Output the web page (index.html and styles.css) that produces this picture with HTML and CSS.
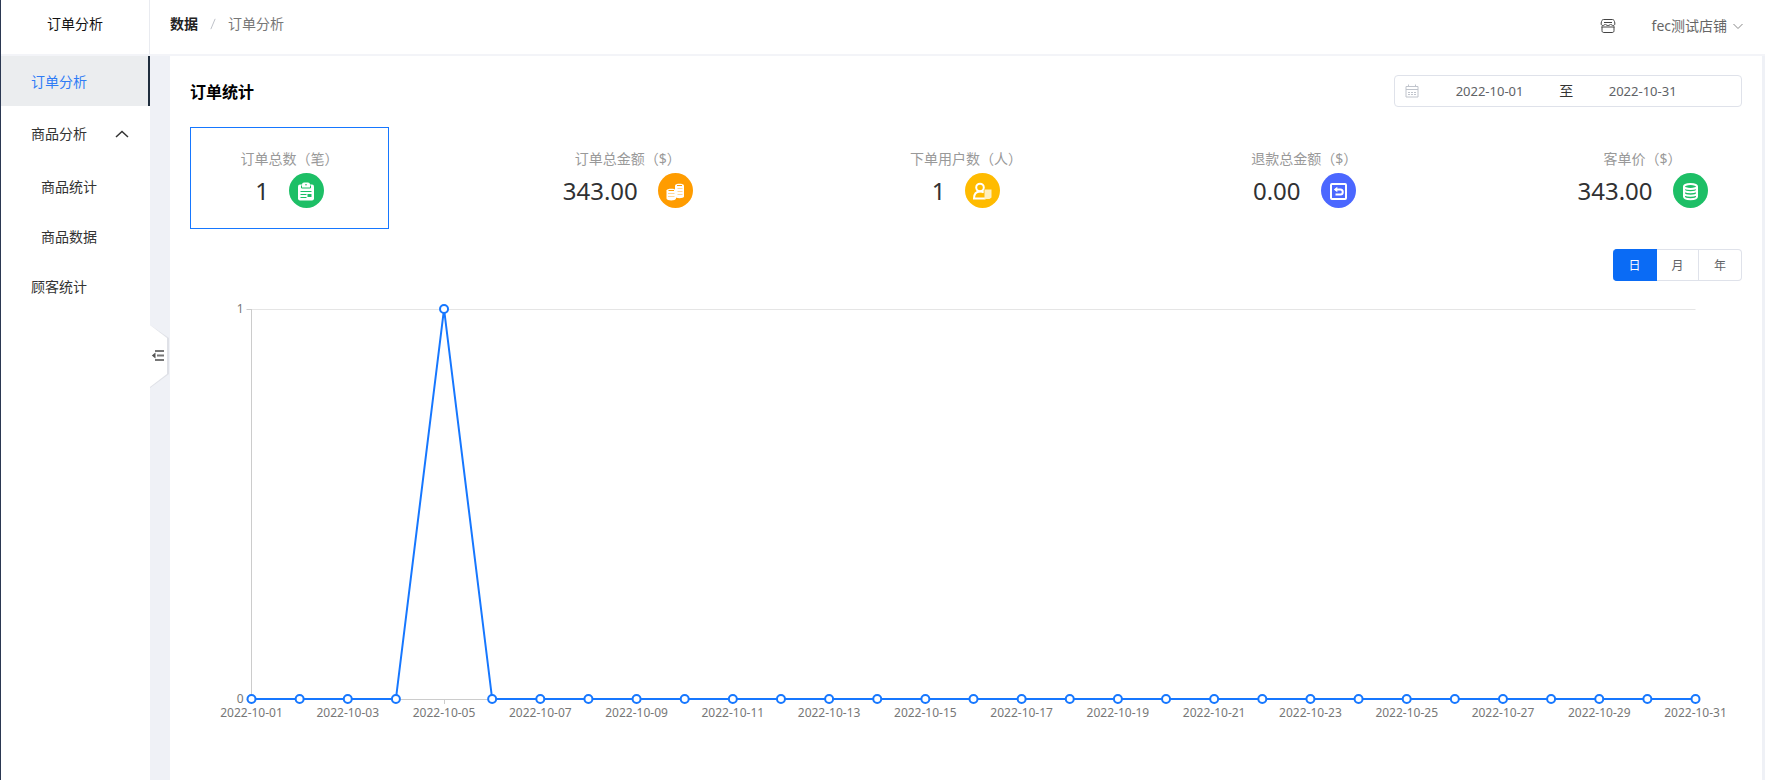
FILE: index.html
```html
<!DOCTYPE html>
<html lang="zh-CN">
<head>
<meta charset="utf-8">
<meta name="viewport" content="width=device-width, initial-scale=1">
<title>订单分析</title>
<link rel="stylesheet" href="styles.css">
</head>
<body>
<div class="app">
  <aside class="sidebar">
    <div class="sidebar-title">订单分析</div>
    <nav class="menu">
      <a class="menu-item active" href="#orders">订单分析</a>
      <button class="menu-item menu-group" type="button" aria-expanded="true">商品分析
        <svg class="menu-arrow" viewBox="0 0 14 14" aria-hidden="true"><path d="M1 10 7 4.500l6 5.500"/></svg>
      </button>
      <a class="menu-item menu-sub" href="#goods-stats">商品统计</a>
      <a class="menu-item menu-sub" href="#goods-data">商品数据</a>
      <a class="menu-item" href="#customers">顾客统计</a>
    </nav>
    <button class="collapse" type="button" aria-label="收起菜单">
      <svg viewBox="0 0 22 68" aria-hidden="true">
        <path class="collapse-shadow" d="M0 3 19 16v36L0 66z"/>
        <path class="collapse-face" d="M0 3 17 16v36L0 65z"/>
        <path class="collapse-bars" d="M5 29h9M7 33.500h7M5 38h9"/>
        <path class="collapse-tip" d="M5.500 30.500v6L1.800 33.500z"/>
      </svg>
    </button>
  </aside>

  <div class="page">
    <header class="topbar">
      <nav class="breadcrumb" aria-label="面包屑">
        <a class="crumb-root" href="#data">数据</a>
        <svg class="crumb-sep" viewBox="0 0 7 14" aria-hidden="true"><path d="M1 13 6 1"/></svg>
        <span>订单分析</span>
      </nav>
      <div class="topbar-tools">
        <button class="icon-button" type="button" aria-label="店铺">
          <svg class="shop-icon" viewBox="0 0 16 16" aria-hidden="true">
            <path d="M3.500 1.500h9c1.200 0 2 1.200 2.300 3.500.2 1.500-.3 2.500-1.500 2.500-1.300 0-1.800-.6-2.600-1.500-.8 1-1.500 1.500-2.700 1.500S6.100 7 5.300 6c-.8.900-1.300 1.500-2.600 1.500C1.500 7.500 1 6.500 1.200 5c.3-2.300 1.100-3.500 2.300-3.500zM4 4.500h8"/>
            <path d="M2 8.500v4c0 1.300.5 2 1.800 2h8.400c1.300 0 1.800-.7 1.800-2v-4M1.500 9h13"/>
          </svg>
        </button>
        <button class="account" type="button">fec测试店铺
          <svg class="account-arrow" viewBox="0 0 10 10" aria-hidden="true"><path d="M.500 3 5 7.500 9.500 3"/></svg>
        </button>
      </div>
    </header>

    <main class="content">
      <div class="panel-head">
        <h1 class="panel-title">订单统计</h1>
        <div class="date-range">
          <svg class="calendar-icon" viewBox="0 0 14 14" aria-hidden="true"><path d="M1 2.500h12v10.500H1zM1 5.500h12M3.500.500v2M10.500.500v2M3 8.500h2M6 8.500h2M9 8.500h2M3 10.500h2M6 10.500h2M9 10.500h2"/></svg>
          <input class="date-input" type="text" value="2022-10-01" aria-label="开始日期">
          <span class="date-sep">至</span>
          <input class="date-input" type="text" value="2022-10-31" aria-label="结束日期">
        </div>
      </div>

      <section class="stats" aria-label="订单指标">
        <div class="stat selected">
          <div class="stat-label">订单总数（笔）</div>
          <div class="stat-row"><span class="stat-value">1</span>
            <svg class="stat-icon green" viewBox="0 0 35 35" aria-hidden="true">
              <circle cx="17.500" cy="17.500" r="17.500"/>
              <rect class="solid" x="9" y="11.500" width="16" height="16" rx="2"/>
              <rect class="solid" x="13" y="9.500" width="8" height="5" rx="2"/>
              <path class="cut" d="M12.500 12.500v2.500h9v-2.500M11.500 18.500h11M11.500 21.500h6M11.500 24.500h6"/>
              <path class="cut-thick" d="M18.500 22.500h4"/>
              <circle cx="17" cy="11.800" r=".8"/>
            </svg>
          </div>
        </div>
        <div class="stat">
          <div class="stat-label">订单总金额（$）</div>
          <div class="stat-row"><span class="stat-value">343.00</span>
            <svg class="stat-icon orange" viewBox="0 0 35 35" aria-hidden="true">
              <circle cx="17.500" cy="17.500" r="17.500"/>
              <path class="solid" d="M17 12.500c0-2.500 9-2.500 9 0v11c0 2.300-9 2.300-9 0z"/>
              <path class="solid" d="M8.500 17.500c0-2.500 9.500-2.500 9.500 0v8c0 2.500-9.500 2.500-9.500 0z"/>
              <path class="cut" d="M19 12.500h5"/>
              <path class="cut" d="M10.500 17.500h5.500"/>
              <path class="faint" d="M19.500 15.500h5M19.500 18.500h5M19.500 21.500h5M10 20.500h6.500M10 23.500h6.500"/>
            </svg>
          </div>
        </div>
        <div class="stat">
          <div class="stat-label">下单用户数（人）</div>
          <div class="stat-row"><span class="stat-value">1</span>
            <svg class="stat-icon yellow" viewBox="0 0 35 35" aria-hidden="true">
              <circle cx="17.500" cy="17.500" r="17.500"/>
              <circle class="line" cx="15" cy="14.500" r="3.800"/>
              <path class="line" d="M20.500 25.500H9c0-4.500 2-7 6-7 1.500 0 2.800.3 3.700 1"/>
              <path class="pale" d="M19.500 16.500h7v8l-2 1.500h-5z"/>
            </svg>
          </div>
        </div>
        <div class="stat">
          <div class="stat-label">退款总金额（$）</div>
          <div class="stat-row"><span class="stat-value">0.00</span>
            <svg class="stat-icon blue" viewBox="0 0 35 35" aria-hidden="true">
              <circle cx="17.500" cy="17.500" r="17.500"/>
              <rect class="line" x="10" y="11" width="15" height="15" rx="1"/>
              <path class="line" d="M14 16.500h5.500c3 0 3 5 0 5h-5"/>
              <path class="solid" d="M12.800 16.500l3.500-2.800v5.600z"/>
            </svg>
          </div>
        </div>
        <div class="stat">
          <div class="stat-label">客单价（$）</div>
          <div class="stat-row"><span class="stat-value">343.00</span>
            <svg class="stat-icon green" viewBox="0 0 35 35" aria-hidden="true">
              <circle cx="17.500" cy="17.500" r="17.500"/>
              <ellipse class="line" cx="17.500" cy="13.500" rx="6.500" ry="2.500"/>
              <path class="line" d="M11 13.500v10c0 3.500 13 3.500 13 0v-10M11 16.500c0 3.500 13 3.500 13 0M11 20c0 3.500 13 3.500 13 0"/>
            </svg>
          </div>
        </div>
      </section>

      <div class="period" role="group" aria-label="统计周期">
        <button class="period-button current" type="button" aria-pressed="true">日</button>
        <button class="period-button" type="button" aria-pressed="false">月</button>
        <button class="period-button" type="button" aria-pressed="false">年</button>
      </div>

      <svg class="chart" id="chart" role="img" aria-label="每日订单总数"></svg>
    </main>
  </div>
</div>
<script src="chart.js"></script>
</body>
</html>
```

FILE: styles.css
```css
* {
  box-sizing: border-box;
}

body {
  margin: 0;
  color: #333;
  font-family: "Noto Sans", "Noto Sans CJK SC", sans-serif;
  font-size: 14px;
  line-height: 20px;
}

a {
  color: inherit;
  text-decoration: none;
}

button,
input {
  margin: 0;
  padding: 0;
  border: 0;
  background: none;
  color: inherit;
  font: inherit;
}

button {
  cursor: pointer;
}

svg {
  display: block;
  flex: none;
  fill: none;
}

.app {
  display: flex;
  min-height: 100vh;
  border-left: 1px solid #2b3852;
  background: #eff1f6;
}

/* Sidebar */
.sidebar {
  position: relative;
  flex: none;
  width: 149px;
  background: #fff;
}

.sidebar-title {
  height: 56px;
  padding-top: 14px;
  border-right: 1px solid #e9ebf0;
  border-bottom: 2px solid #f3f4f8;
  color: #111;
  text-align: center;
}

.menu {
  display: flex;
  flex-direction: column;
}

.menu-item {
  display: flex;
  align-items: center;
  justify-content: space-between;
  height: 50px;
  padding: 0 21px 0 30px;
}

.menu-item.active {
  padding-top: 2px;
  border-right: 2px solid #1f2d3d;
  background: #ebedef;
  color: #2f7cf6;
}

.menu-group {
  height: 56px;
}

.menu-sub {
  padding-left: 40px;
}

.menu-arrow {
  width: 14px;
  height: 14px;
  stroke: #333;
  stroke-width: 1.5;
}

.collapse {
  position: absolute;
  top: 322px;
  left: 100%;
}

.collapse svg {
  width: 22px;
  height: 68px;
}

.collapse-shadow {
  fill: #dfe1e7;
}

.collapse-face {
  fill: #fff;
}

.collapse-bars {
  stroke: #777;
  stroke-width: 2;
}

.collapse-tip {
  fill: #555;
}

/* Top bar */
.page {
  display: flex;
  flex: 1;
  flex-direction: column;
  min-width: 0;
}

.topbar {
  display: flex;
  justify-content: space-between;
  height: 56px;
  padding: 0 22px 0 20px;
  border-bottom: 2px solid #f3f4f8;
  background: #fff;
}

.breadcrumb {
  display: flex;
  gap: 12px;
  padding-top: 14px;
  color: #777;
}

.crumb-root {
  color: #222;
  font-weight: 700;
}

.crumb-sep {
  width: 6px;
  height: 14px;
  margin-top: 3px;
  stroke: #b4b8c0;
}

.topbar-tools {
  display: flex;
  align-items: center;
  gap: 36px;
  padding-bottom: 2px;
  color: #666;
}

.shop-icon {
  width: 16px;
  height: 16px;
  stroke: #444;
}

.account {
  display: flex;
  align-items: center;
  gap: 6px;
}

.account-arrow {
  width: 10px;
  height: 10px;
  stroke: #888;
}

/* Panel */
.content {
  flex: 1;
  margin: 0 3px 0 20px;
  padding: 19px 20px 20px;
  background: #fff;
}

.panel-head {
  display: flex;
  align-items: center;
  justify-content: space-between;
}

.panel-title {
  margin: 0;
  padding-top: 2px;
  color: #000;
  font-size: 16px;
  line-height: 24px;
}

.date-range {
  display: flex;
  align-items: center;
  width: 348px;
  height: 32px;
  padding: 0 10px;
  border: 1px solid #dfe2ea;
  border-radius: 4px;
  color: #606266;
  font-size: 13px;
}

.calendar-icon {
  width: 14px;
  height: 14px;
  margin-right: 7px;
  stroke: #c0c4cc;
}

.date-input {
  width: 39%;
  text-align: center;
}

.date-sep {
  width: 26px;
  color: #333;
  font-size: 14px;
  text-align: center;
}

.stats {
  display: flex;
  justify-content: space-between;
  margin-top: 20px;
}

.stat {
  display: flex;
  flex-direction: column;
  align-items: center;
  width: 199px;
  height: 102px;
  padding-top: 21px;
  border: 1px solid transparent;
}

.stat.selected {
  border-color: #1677ff;
}

.stat-label {
  height: 24px;
  color: #999;
  white-space: nowrap;
}

.stat-row {
  display: flex;
  align-items: center;
  gap: 20px;
}

.stat-value {
  color: #303133;
  font-size: 24px;
  line-height: 35px;
}

.stat-icon {
  width: 35px;
  height: 35px;
}

.green {
  color: #1dbf66;
}

.orange {
  color: #ff9c00;
}

.yellow {
  color: #ffbb00;
}

.blue {
  color: #4b67ff;
}

.stat-icon circle {
  fill: currentColor;
}

.stat-icon .solid {
  fill: #fff;
}

.stat-icon .line {
  fill: none;
  stroke: #fff;
  stroke-width: 2;
}

.stat-icon .pale {
  fill: #fff0bf;
}

.stat-icon .cut {
  stroke: currentColor;
}

.stat-icon .faint {
  stroke: currentColor;
  stroke-opacity: 0.4;
}

.stat-icon .cut-thick {
  stroke: currentColor;
  stroke-width: 3;
}

.period {
  display: flex;
  justify-content: flex-end;
  margin-top: 20px;
}

.period-button {
  width: 42px;
  height: 32px;
  padding-top: 1px;
  border: 1px solid #dfe2ea;
  border-left-width: 0;
  color: #606266;
  font-size: 12px;
}

.period-button.current {
  width: 44px;
  border-color: #0a6bf5;
  border-radius: 4px 0 0 4px;
  background: #0a6bf5;
  color: #fff;
}

.period-button:last-child {
  width: 43px;
  border-radius: 0 4px 4px 0;
}

/* Chart */
.chart {
  width: 100%;
  height: 460px;
}

.chart text {
  fill: #777;
  font-size: 12px;
}

.chart .axis {
  stroke: #ccc;
}

.chart .grid {
  stroke: #e5e5e5;
}

.chart .series {
  stroke: #1677ff;
  stroke-width: 2;
  stroke-linejoin: bevel;
}

.chart .point {
  fill: #fff;
  stroke: #1677ff;
  stroke-width: 2;
}
```

FILE: chart.js
```js
const chart = document.getElementById("chart");
const orders = Array.from({ length: 31 }, (_, i) => ({
  date: "2022-10-" + String(i + 1).padStart(2, "0"),
  count: i === 4 ? 1 : 0
}));
const area = { left: 61.5, right: 46.5, top: 28, bottom: 418 };

function add(tag, attrs, text) {
  const node = document.createElementNS("http://www.w3.org/2000/svg", tag);
  for (const key in attrs) node.setAttribute(key, attrs[key]);
  if (text !== undefined) node.textContent = text;
  chart.appendChild(node);
}

function draw() {
  chart.replaceChildren();
  const right = Math.round(chart.getBoundingClientRect().width) - area.right;
  const step = (right - area.left) / (orders.length - 1);
  const x = i => area.left + step * i;
  const y = v => area.bottom - (area.bottom - area.top) * v;
  const crisp = n => Math.floor(n) + 0.5;

  add("path", { class: "grid", d: `M${area.left} ${crisp(area.top)}H${right}` });
  add("path", { class: "axis", d: `M${area.left - 5} ${crisp(area.top)}h5M${area.left - 5} ${crisp(area.bottom)}H${right}M${crisp(area.left)} ${area.top}V${area.bottom}` });
  [0, 1].forEach(v => add("text", { x: area.left - 8, y: y(v) + 4, "text-anchor": "end" }, v));
  orders.forEach((o, i) => {
    if (i % 2) return;
    add("path", { class: "axis", d: `M${crisp(x(i))} ${area.bottom}v5` });
    add("text", { x: x(i), y: area.bottom + 18, "text-anchor": "middle" }, o.date);
  });
  add("polyline", { class: "series", points: orders.map((o, i) => `${x(i)},${y(o.count)}`).join(" ") });
  orders.forEach((o, i) => add("circle", { class: "point", cx: x(i), cy: y(o.count), r: 4 }));
}

draw();
window.addEventListener("resize", draw);
```
